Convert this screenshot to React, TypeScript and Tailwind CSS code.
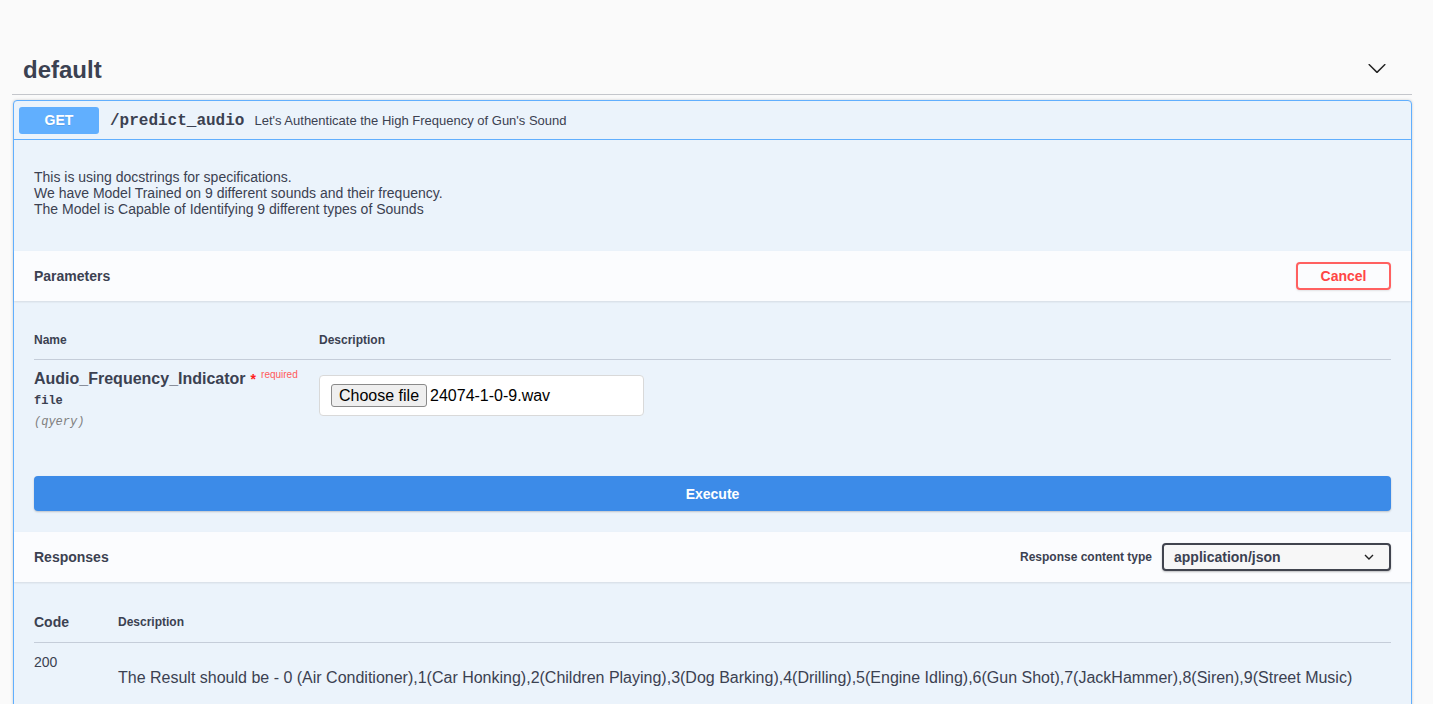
import React from 'react';

// Swagger UI: "default" tag with an expanded GET /predict_audio operation
const sans = { fontFamily: '"Liberation Sans", Arial, sans-serif' };
const mono = { fontFamily: '"Liberation Mono", "Courier New", monospace' };

const Chevron = ({ className }: { className?: string }) => (
    <svg viewBox="0 0 20 20" className={className} fill="currentColor">
        <path d="M17.418 6.109c.272-.268.709-.268.979 0s.271.701 0 .969l-7.908 7.83c-.27.268-.707.268-.979 0l-7.908-7.83c-.27-.268-.27-.701 0-.969.271-.268.709-.268.979 0L10 13.25l7.418-7.141z" />
    </svg>
);

const SectionHeader = ({ title, children }: { title: string; children?: React.ReactNode }) => (
    <div className="h-[50px] flex items-center justify-between px-5 bg-[#fbfcfe] shadow-[0_1px_2px_rgba(0,0,0,0.1)]">
        <h4 className="text-sm font-bold text-[#3b4151]">{title}</h4>
        {children}
    </div>
);

export default function App() {
    return (
        <div className="min-h-screen bg-[#fafafa] pt-[46px] pl-[12px] pr-[21px] text-[#3b4151]" style={sans}>
            {/* tag heading */}
            <div className="h-[49px] flex items-center justify-between pl-[11px] pr-[25px] border-b border-[#c4c6cb]">
                <h3 className="text-2xl font-bold text-[#3b4151]">default</h3>
                <Chevron className="w-5 h-5 mb-[5px] text-[#222]" />
            </div>

            {/* operation block */}
            <div className="mt-[5px] ml-px border border-[#61affe] rounded bg-[#ebf3fb] shadow-[0_0_3px_rgba(0,0,0,0.19)]">
                <div className="h-[39px] flex items-center px-[5px] border-b border-[#61affe]">
                    <span className="w-[80px] h-[27px] flex items-center justify-center rounded-[3px] bg-[#61affe] text-white text-sm font-bold [text-shadow:0_1px_0_rgba(0,0,0,0.1)]">GET</span>
                    <span className="pl-[11px] pr-[10px] pt-px text-base font-bold text-[#3b4151]" style={mono}>/predict_audio</span>
                    <span className="pt-px text-[13px] text-[#3b4151]">Let's Authenticate the High Frequency of Gun's Sound</span>
                </div>

                {/* description */}
                <div className="px-5 pt-[29px] pb-[34px] text-sm leading-4 text-[#3b4151]">
                    <p>This is using docstrings for specifications.</p>
                    <p>We have Model Trained on 9 different sounds and their frequency.</p>
                    <p>The Model is Capable of Identifying 9 different types of Sounds</p>
                </div>

                {/* parameters */}
                <SectionHeader title="Parameters">
                    <button className="w-[95px] h-[28px] rounded border-2 border-[#ff6060] text-[#ff4545] text-sm font-bold shadow-[0_1px_2px_rgba(0,0,0,0.1)]">Cancel</button>
                </SectionHeader>
                <div className="px-5 pt-[20px] pb-[25px]">
                    <div className="flex border-b border-[#c5cdd9] py-3 text-xs font-bold leading-[14px]">
                        <div className="w-[285px]">Name</div>
                        <div>Description</div>
                    </div>
                    <div className="flex">
                        <div className="w-[285px] pt-[10px]">
                            <div className="flex items-start">
                                <span className="text-base font-bold leading-[18px]">Audio_Frequency_Indicator</span>
                                <span className="ml-[5px] text-[#ff2020] text-sm font-bold leading-[18px]">*</span>
                                <span className="ml-[5px] -mt-[1px] text-[10px] leading-[12px] text-[#ff5a5a]">required</span>
                            </div>
                            <div className="pt-[6px] text-xs font-bold leading-[14px]" style={mono}>file</div>
                            <div className="pt-[7px] text-xs italic leading-[14px] text-[#808080]" style={mono}>(qyery)</div>
                        </div>
                        <div className="pt-[15px] pb-[15px]">
                            <div className="w-[325px] h-[41px] flex items-center px-[11px] bg-white border border-[#d9d9d9] rounded text-base">
                                <span className="h-[23px] px-[7px] flex items-center bg-[#efefef] border border-[#8a8a8a] rounded-[3px] text-black">Choose file</span>
                                <span className="ml-[3px] text-black">24074-1-0-9.wav</span>
                            </div>
                        </div>
                    </div>
                </div>
                <div className="px-5 pt-[20px] pb-[21px]">
                    <button className="w-full h-[35px] rounded bg-[#3c8be8] text-white text-sm font-bold shadow-[0_1px_2px_rgba(0,0,0,0.2)]">Execute</button>
                </div>

                {/* responses */}
                <SectionHeader title="Responses">
                    <div className="flex items-center">
                        <span className="text-xs font-bold mr-[10px]">Response content type</span>
                        <div className="w-[229px] h-[28px] flex items-center justify-between pl-[10px] pr-[15px] bg-[#f7f7f7] border-2 border-[#41444e] rounded shadow-[0_1px_2px_rgba(0,0,0,0.25)] text-sm font-bold">
                            <span>application/json</span>
                            <svg viewBox="0 0 10 6" className="w-[10px] h-[6px]" fill="none" stroke="#222" strokeWidth="1.4">
                                <path d="M1 1l4 4 4-4" />
                            </svg>
                        </div>
                    </div>
                </SectionHeader>
                <div className="px-5 pt-[18px] pb-[40px]">
                    <div className="flex items-center border-b border-[#c5cdd9] pt-3 pb-[10px] leading-4 font-bold">
                        <div className="w-[84px] text-sm">Code</div>
                        <div className="text-xs">Description</div>
                    </div>
                    <div className="flex pt-[11px]">
                        <div className="w-[84px] text-sm leading-4">200</div>
                        <div className="pt-[15px] text-base leading-[18px]">The Result should be - 0 (Air Conditioner),1(Car Honking),2(Children Playing),3(Dog Barking),4(Drilling),5(Engine Idling),6(Gun Shot),7(JackHammer),8(Siren),9(Street Music)</div>
                    </div>
                </div>
            </div>
        </div>
    );
}
